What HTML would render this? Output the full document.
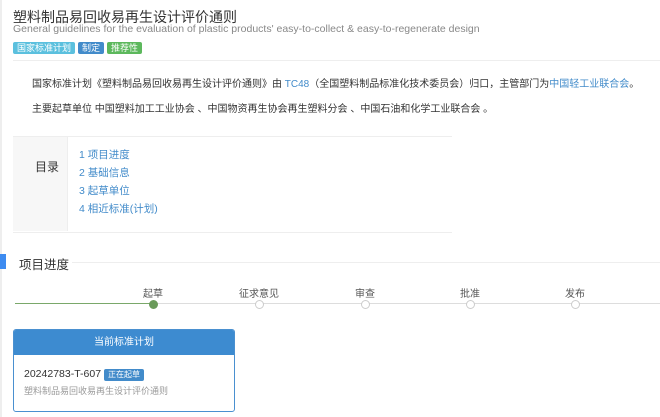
<!DOCTYPE html>
<html><head><meta charset="utf-8"><style>
body{margin:0;width:660px;height:417px;overflow:hidden;background:#fff;font-family:"Liberation Sans","Noto Sans CJK SC",sans-serif;position:relative;color:#333}
.a{position:absolute;white-space:nowrap}
.b{display:inline-block;color:#fff;font-size:9px;padding:0 4px;height:12px;line-height:12px;border-radius:2px;margin-right:3px}
.dot{position:absolute;top:300px;width:7px;height:7px;border-radius:50%;border:1px solid #ccc;background:#fff}
.lab{position:absolute;top:285px;font-size:10px;color:#555;transform:translateX(-50%)}
</style></head><body>
<div class="a" style="left:0;top:0;width:2px;height:417px;background:#eee"></div>
<div class="a" style="left:13px;top:7px;font-size:14px;color:#333">塑料制品易回收易再生设计评价通则</div>
<div class="a" style="left:13px;top:23px;font-size:10.5px;color:#888">General guidelines for the evaluation of plastic products' easy-to-collect &amp; easy-to-regenerate design</div>
<div class="a" style="left:13px;top:38px"><span class="b" style="background:#5bc0de">国家标准计划</span><span class="b" style="background:#428bca">制定</span><span class="b" style="background:#5cb85c">推荐性</span></div>
<div class="a" style="left:13px;top:60px;width:647px;height:1px;background:#eee"></div>
<div class="a" style="left:32px;top:75px;font-size:10px">国家标准计划《塑料制品易回收易再生设计评价通则》由 <span style="color:#428bca">TC48</span>（全国塑料制品标准化技术委员会）归口，主管部门为<span style="color:#428bca">中国轻工业联合会</span>。</div>
<div class="a" style="left:32px;top:100px;font-size:10px">主要起草单位 中国塑料加工工业协会 、中国物资再生协会再生塑料分会 、中国石油和化学工业联合会 。</div>
<div class="a" style="left:13px;top:136px;width:439px;height:95px;border-top:1px solid #eee;border-bottom:1px solid #eee"></div>
<div class="a" style="left:13px;top:137px;width:54px;height:94px;background:#f7f7f7;border-right:1px solid #eee"></div>
<div class="a" style="left:35px;top:158px;font-size:12px;color:#333">目录</div>
<div class="a" style="left:79px;top:146px;font-size:10.5px;color:#428bca;line-height:18px">1 项目进度<br>2 基础信息<br>3 起草单位<br>4 相近标准(计划)</div>
<div class="a" style="left:0;top:254px;width:6px;height:15px;background:#3d8bf0"></div>
<div class="a" style="left:19px;top:254px;font-size:12.5px;color:#333">项目进度</div>
<div class="a" style="left:72px;top:262px;width:588px;height:1px;background:#eee"></div>
<div class="a" style="left:15px;top:303px;width:645px;height:1px;background:#ddd"></div>
<div class="a" style="left:15px;top:303px;width:138px;height:1px;background:#7aa86a"></div>
<div class="lab" style="left:153px">起草</div><div class="lab" style="left:259px">征求意见</div><div class="lab" style="left:365px">审查</div><div class="lab" style="left:470px">批准</div><div class="lab" style="left:575px">发布</div>
<div class="dot" style="left:149px;background:#6a9a5a;border-color:#6a9a5a"></div>
<div class="dot" style="left:255px"></div><div class="dot" style="left:361px"></div><div class="dot" style="left:466px"></div><div class="dot" style="left:571px"></div>
<div class="a" style="left:13px;top:329px;width:220px;height:81px;border:1px solid #4a90d0;border-radius:3px;overflow:hidden">
<div style="height:25px;background:#3d8bd0;color:#fff;font-size:10px;text-align:center;line-height:25px">当前标准计划</div>
<div style="position:absolute;left:10px;top:38px;font-size:10.5px;color:#333">20242783-T-607 <span class="b" style="background:#428bca;font-size:8px">正在起草</span></div>
<div style="position:absolute;left:10px;top:54px;font-size:9px;color:#999">塑料制品易回收易再生设计评价通则</div>
</div>
</body></html>
